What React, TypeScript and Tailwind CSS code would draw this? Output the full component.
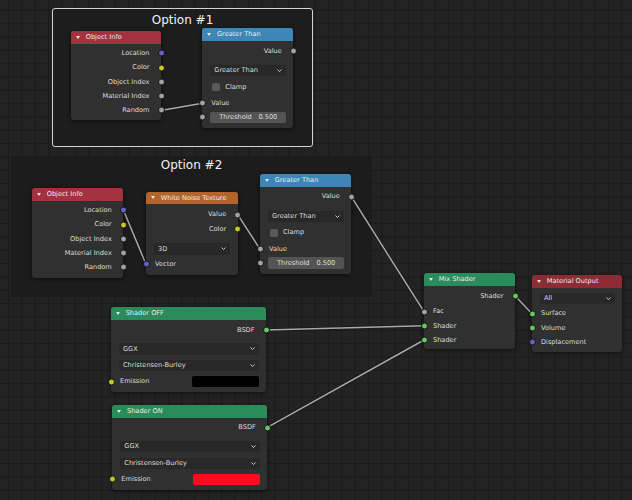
import type { ReactNode } from 'react';

type Sock = 'grey' | 'yellow' | 'blue' | 'green';

const sockBg: Record<Sock, string> = {
  grey: 'bg-[#a1a1a1]',
  yellow: 'bg-[#c7c729]',
  blue: 'bg-[#6363c7]',
  green: 'bg-[#63c763]',
};

function Socket({ color, side }: { color: Sock; side: 'left' | 'right' }) {
  return (
    <span
      className={`absolute top-1/2 -translate-y-1/2 w-[7px] h-[7px] rounded-full border border-[#141414] ${sockBg[color]} ${
        side === 'left' ? '-left-[3.5px]' : '-right-[3.5px]'
      }`}
    />
  );
}

function Node({ pos, header, title, children }: { pos: string; header: string; title: string; children: ReactNode }) {
  return (
    <div className={`absolute ${pos} rounded-[3px] bg-[#303030] shadow-[0_1px_4px_rgba(0,0,0,0.6)]`}>
      <div className={`h-[12.5px] rounded-t-[3px] ${header} flex items-center pl-[5px] text-[#ececec]`}>
        <svg width="4" height="3" viewBox="0 0 4 3" className="mr-[5.7px]">
          <path d="M0 0 H4 L2 3 Z" fill="#e8e8e8" />
        </svg>
        <span>{title}</span>
      </div>
      {children}
    </div>
  );
}

function Out({ label, color, className = '' }: { label: string; color: Sock; className?: string }) {
  return (
    <div className={`relative h-[14.3px] flex items-center justify-end pr-[11.5px] ${className}`}>
      {label}
      <Socket color={color} side="right" />
    </div>
  );
}

function In({ label, color, className = '' }: { label: string; color: Sock; className?: string }) {
  return (
    <div className={`relative h-[14.3px] flex items-center pl-[9px] ${className}`}>
      {label}
      <Socket color={color} side="left" />
    </div>
  );
}

function Chevron() {
  return (
    <svg width="5" height="3" viewBox="0 0 5 3">
      <path d="M0.5 0.5 L2.5 2.5 L4.5 0.5" fill="none" stroke="#d8d8d8" strokeWidth="0.9" />
    </svg>
  );
}

function Dropdown({ label, className = '' }: { label: string; className?: string }) {
  return (
    <div
      className={`mx-[7.5px] h-[11.3px] rounded-[2px] bg-[#282828] flex items-center justify-between pl-[4.5px] pr-[4px] ${className}`}
    >
      <span>{label}</span>
      <Chevron />
    </div>
  );
}

function GreaterThan() {
  return (
    <div className="pt-[3px]">
      <Out label="Value" color="grey" />
      <Dropdown label="Greater Than" className="mt-[6.9px]" />
      <div className="h-[14.3px] mt-[3.5px] flex items-center pl-[9.5px] gap-[5.5px]">
        <span className="w-[8px] h-[8px] rounded-[1.5px] bg-[#595959]" />
        <span>Clamp</span>
      </div>
      <In label="Value" color="grey" className="mt-[2px]" />
      <div className="relative h-[11.3px] mt-[1.25px]">
        <Socket color="grey" side="left" />
        <div className="mx-[7.5px] h-full rounded-[2px] bg-[#545454] flex items-center justify-between pl-[9.5px] pr-[8.5px]">
          <span>Threshold</span>
          <span>0.500</span>
        </div>
      </div>
    </div>
  );
}

function ObjectInfo() {
  return (
    <div className="pt-[2.65px]">
      <Out label="Location" color="blue" />
      <Out label="Color" color="yellow" />
      <Out label="Object Index" color="grey" />
      <Out label="Material Index" color="grey" />
      <Out label="Random" color="grey" />
    </div>
  );
}

function Principled({ swatch }: { swatch: string }) {
  return (
    <div className="pt-[3px]">
      <Out label="BSDF" color="green" />
      <Dropdown label="GGX" className="mt-[6.2px]" />
      <Dropdown label="Christensen-Burley" className="mt-[5.4px]" />
      <div className="relative h-[14.3px] mt-[3.25px] flex items-center justify-between pl-[9px] pr-[7px]">
        <span>Emission</span>
        <span className={`w-[67px] h-[11.3px] rounded-[2px] ${swatch}`} />
        <Socket color="yellow" side="left" />
      </div>
    </div>
  );
}

export default function App() {
  return (
    <div
      className="relative w-[632px] h-[500px] overflow-hidden bg-[#232323] bg-[linear-gradient(to_right,#1a1a1a_1px,transparent_1px),linear-gradient(to_bottom,#1a1a1a_1px,transparent_1px)] bg-[length:13.333px_13.333px] bg-[position:8px_10px] text-[6.6px] leading-none text-[#dedede] font-['DejaVu_Sans',sans-serif]"
    >
      {/* frames */}
      <div className="absolute left-[52px] top-[8px] w-[261px] h-[139px] rounded-[3px] border border-[#d4d4d4] bg-[#1d1d1d] pt-[4px] text-center text-[12px] leading-[14px] text-[#f2f2f2]">
        Option #1
      </div>
      <div className="absolute left-[11px] top-[156px] w-[361px] h-[141px] rounded-[3px] bg-[#1c1c1c] pt-[2px] text-center text-[12px] leading-[14px] text-[#f2f2f2]">
        Option #2
      </div>

      {/* links */}
      <svg className="absolute inset-0 pointer-events-none" width="632" height="500">
        {[
          [162, 110.3, 202.5, 103.3],
          [123.5, 210.3, 146, 264.3],
          [237.7, 214.7, 260, 249],
          [351.3, 196.7, 424, 311.7],
          [266, 330, 424, 325.8],
          [267.3, 427.3, 424, 340],
          [515, 295.7, 532, 313.7],
        ].map(([x1, y1, x2, y2], i) => (
          <g key={i}>
            <line x1={x1} y1={y1} x2={x2} y2={y2} stroke="#181818" strokeWidth="3" strokeLinecap="round" />
            <line x1={x1} y1={y1} x2={x2} y2={y2} stroke="#a9a9a9" strokeWidth="1.5" strokeLinecap="round" />
          </g>
        ))}
      </svg>

      {/* option 1 */}
      <Node pos="left-[71px] top-[31px] w-[90px] h-[89px]" header="bg-[#a3323f]" title="Object Info">
        <ObjectInfo />
      </Node>
      <Node pos="left-[202.3px] top-[28.3px] w-[91px] h-[99.5px]" header="bg-[#3d86b8]" title="Greater Than">
        <GreaterThan />
      </Node>

      {/* option 2 */}
      <Node pos="left-[32px] top-[188px] w-[91.3px] h-[89.5px]" header="bg-[#a3323f]" title="Object Info">
        <ObjectInfo />
      </Node>
      <Node pos="left-[146px] top-[191.7px] w-[91.7px] h-[83.6px]" header="bg-[#b4632b]" title="White Noise Texture">
        <div className="pt-[3.35px]">
          <Out label="Value" color="grey" />
          <Out label="Color" color="yellow" />
          <Dropdown label="3D" className="mt-[7.15px]" />
          <In label="Vector" color="blue" className="mt-[2.55px]" />
        </div>
      </Node>
      <Node pos="left-[260px] top-[174px] w-[91.3px] h-[100px]" header="bg-[#3d86b8]" title="Greater Than">
        <GreaterThan />
      </Node>

      {/* shaders */}
      <Node pos="left-[111px] top-[307.3px] w-[155px] h-[85px]" header="bg-[#2b8c5b]" title="Shader OFF">
        <Principled swatch="bg-black" />
      </Node>
      <Node pos="left-[112.3px] top-[405px] w-[155px] h-[85px]" header="bg-[#2b8c5b]" title="Shader ON">
        <Principled swatch="bg-[#ff0b1e]" />
      </Node>

      <Node pos="left-[424px] top-[273.3px] w-[91px] h-[76px]" header="bg-[#2b8c5b]" title="Mix Shader">
        <div className="pt-[3px]">
          <Out label="Shader" color="green" />
          <In label="Fac" color="grey" className="mt-[1.45px]" />
          <In label="Shader" color="green" />
          <In label="Shader" color="green" />
        </div>
      </Node>

      <Node pos="left-[532px] top-[275px] w-[90px] h-[76.7px]" header="bg-[#8e2c35]" title="Material Output">
        <Dropdown label="All" className="mt-[5px]" />
        <In label="Surface" color="green" className="mt-[2.75px]" />
        <In label="Volume" color="green" />
        <In label="Displacement" color="blue" />
      </Node>
    </div>
  );
}
